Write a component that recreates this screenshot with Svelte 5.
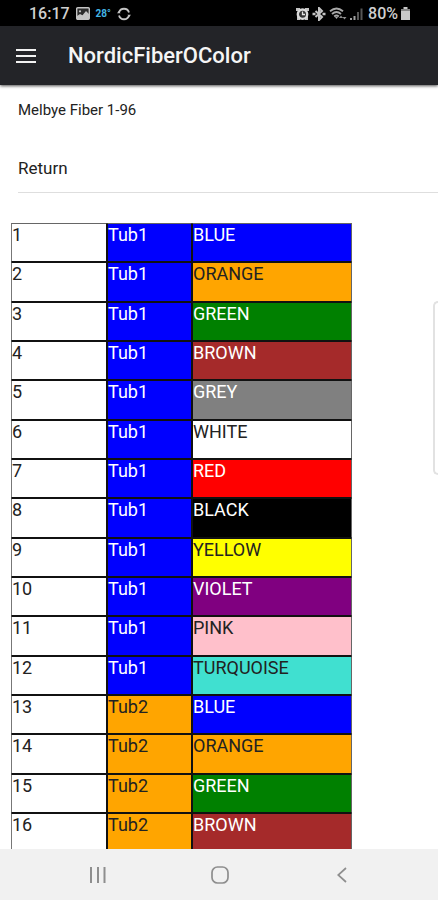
<script>
  const fiberColors = [
    'blue', 'orange', 'green', 'brown', 'grey', 'white',
    'red', 'black', 'yellow', 'violet', 'pink', 'turquoise'
  ];

  const rows = Array.from({ length: 16 }, (_, i) => ({
    number: i + 1,
    tub: Math.floor(i / 12) + 1,
    tubColor: fiberColors[Math.floor(i / 12)],
    color: fiberColors[i % 12]
  }));
</script>

<div class="screen">
  <div class="status">
    <div class="group">
      <span class="clock">16:17</span>
      <svg class="picture" width="14" height="13" viewBox="0 0 14 13" aria-hidden="true">
        <rect x="0.7" y="0.7" width="12.6" height="11.6" rx="1" fill="#2b2b2b" stroke="#c4c4c4" stroke-width="1.4" />
        <circle cx="4" cy="4.3" r="1.1" fill="#c4c4c4" />
        <path d="M1 10.5V9l3-2 2.5 1.2L10 4l3 3v5H1z" fill="#c4c4c4" />
      </svg>
      <span class="temp">28°</span>
      <svg width="14" height="14" viewBox="0 0 14 14" fill="none" stroke="#c4c4c4" stroke-width="1.8" aria-hidden="true">
        <path d="M2 5.5A5.2 5.2 0 0 1 12 5.5M12 8.5A5.2 5.2 0 0 1 2 8.5" />
        <path d="M0 6.2h3.6L1.8 4zM14 7.8h-3.6L12.2 10z" fill="#c4c4c4" stroke="none" />
      </svg>
    </div>
    <div class="group right">
      <svg width="13" height="14" viewBox="0 0 13 14" aria-hidden="true">
        <path d="M0 1h4v3H0zM9 1h4v3H9zM1 10h3v3H1zM9 10h3v3H9z" fill="#c4c4c4" />
        <circle cx="6.5" cy="7.2" r="4.7" fill="#333" stroke="#dadada" stroke-width="2.4" />
        <path d="M6.5 4.5v3h2.5" fill="none" stroke="#e5e5e5" stroke-width="1.3" />
      </svg>
      <svg width="14" height="14" viewBox="0 0 14 14" fill="none" stroke="#c4c4c4" stroke-width="2" aria-hidden="true">
        <path d="M3.5 4l6.5 6-3 3V1l3 3-6.5 6" />
        <path d="M0.5 7h3M10.5 7h3" stroke-width="2.4" />
      </svg>
      <svg class="wifi" width="18" height="14" viewBox="0 0 18 14" fill="none" stroke="#a8a8a8" stroke-width="1.8" aria-hidden="true">
        <path d="M1 4.3Q7.5-1.3 14 4.3M3 7Q7.5 3 12 7M5.2 9.5Q7.5 7.4 9.8 9.5" />
        <path d="M6 10h3l-1.5 2z" fill="#a8a8a8" stroke="none" />
        <path d="M10 11l2-2.5 2 2.5zM13.500 10h4l-2 2.500z" fill="#8c8c8c" stroke="none" />
      </svg>
      <svg width="13" height="14" viewBox="0 0 13 14" aria-hidden="true">
        <path d="M0 11h2v2H0zM3.500 9h2v4h-2z" fill="#a0a0a0" />
        <path d="M7 5h2v8H7zM10.500 1.500h2V13h-2z" fill="#565656" />
      </svg>
      <span class="clock charge">80%</span>
      <svg width="9" height="13" viewBox="0 0 9 13" aria-hidden="true">
        <path d="M2.500 0h4v2H9v11H0V2h2.500z" fill="#c8c8c8" />
        <path d="M0 2h9v2H0z" fill="#858585" />
      </svg>
    </div>
  </div>

  <header>
    <button class="menu" aria-label="Open menu">
      <svg width="20" height="14" viewBox="0 0 20 14" fill="#f2f2f2" aria-hidden="true">
        <path d="M0 0h20v2H0zM0 6h20v2H0zM0 12h20v2H0z" />
      </svg>
    </button>
    <h1>NordicFiberOColor</h1>
  </header>

  <main>
    <p>Melbye Fiber 1-96</p>
    <a class="return" href="#return">Return</a>
    <table aria-label="Fiber colors">
      <colgroup><col class="c1" /><col class="c2" /><col class="c3" /></colgroup>
      <tbody>
        {#each rows as row (row.number)}
          <tr>
            <td>{row.number}</td>
            <td class={row.tubColor}>Tub{row.tub}</td>
            <td class={row.color}>{row.color.toUpperCase()}</td>
          </tr>
        {/each}
      </tbody>
    </table>
  </main>

  <nav aria-label="System">
    <button aria-label="Recent apps">
      <svg width="18" height="16" viewBox="0 0 18 16" fill="#8e8e8e" aria-hidden="true">
        <path d="M1 0h2v16H1zM8 0h2v16H8zM14.500 0h2v16h-2z" />
      </svg>
    </button>
    <button aria-label="Home">
      <svg width="18" height="18" viewBox="0 0 18 18" fill="none" stroke="#8e8e8e" stroke-width="1.700" aria-hidden="true">
        <rect x="1" y="1" width="16" height="16" rx="5.500" />
      </svg>
    </button>
    <button aria-label="Back">
      <svg width="10" height="16" viewBox="0 0 10 16" fill="none" stroke="#8e8e8e" stroke-width="1.700" aria-hidden="true">
        <path d="M9 1L1.200 8 9 15" />
      </svg>
    </button>
  </nav>

  <div class="edge"></div>
</div>

<style>
  .screen {
    position: relative;
    display: flex;
    flex-direction: column;
    height: 100vh;
    overflow: hidden;
    background: #fff;
    color: #222;
    font-family: Roboto, "Liberation Sans", sans-serif;
  }

  .status {
    display: flex;
    justify-content: space-between;
    align-items: center;
    flex: none;
    height: 26px;
    padding: 1px 28px 0 29px;
    box-sizing: border-box;
    background: #000;
    color: #cfcfcf;
  }

  .group {
    display: flex;
    align-items: center;
    gap: 6px;
  }

  .right {
    gap: 3px;
  }

  .clock {
    font-size: 16px;
    line-height: 20px;
    font-weight: 500;
  }

  .temp {
    color: #43b4e4;
    font-size: 10px;
    font-weight: 700;
  }

  .charge {
    margin-left: 2px;
  }

  button {
    display: flex;
    align-items: center;
    justify-content: center;
    margin: 0;
    padding: 0;
    border: 0;
    background: none;
  }

  header {
    position: relative;
    display: flex;
    align-items: center;
    flex: none;
    height: 59px;
    padding-left: 8px;
    background: #232428;
    box-shadow: 0 1px 3px rgba(0, 0, 0, 0.7);
  }

  .menu {
    width: 36px;
    height: 36px;
  }

  h1 {
    margin: 0 0 0 24px;
    color: #f5f5f5;
    font-size: 22px;
    line-height: 28px;
    font-weight: 500;
  }

  main {
    flex: 1;
    min-height: 0;
    overflow: hidden;
  }

  p {
    margin: 15px 18px 0;
    font-size: 15px;
    line-height: 20px;
  }

  .return {
    display: block;
    margin: 24px 0 30px 18px;
    padding: 12px 0;
    border-bottom: 1px solid #dedede;
    color: #222;
    font-size: 17px;
    line-height: 24px;
    text-decoration: none;
  }

  table {
    width: 341px;
    margin-left: 11px;
    border-spacing: 0;
    table-layout: fixed;
    font-size: 18px;
    line-height: 20px;
  }

  .c1 { width: 96px; }
  .c2 { width: 85px; }
  .c3 { width: 160px; }

  tr { height: 39px; }
  tr:nth-child(3n + 2) { height: 40px; }

  td {
    box-sizing: border-box;
    padding: 1px 0 0;
    border: 1px solid #111;
    vertical-align: top;
  }

  td:first-child { border-left-color: #777; }
  td:last-child { border-right-color: #666; }
  tr:first-child td { border-top-color: #666; }

  .blue { background: #00f; color: #fff; }
  .orange { background: #ffa500; }
  .green { background: #008000; color: #fff; }
  .brown { background: #a52a2a; color: #fff; }
  .grey { background: #808080; color: #fff; }
  .white { background: #fff; }
  .red { background: #f00; color: #fff; }
  .black { background: #000; color: #fff; }
  .yellow { background: #ff0; }
  .violet { background: #800080; color: #fff; }
  .pink { background: #ffc0cb; }
  .turquoise { background: #40e0d0; }

  nav {
    display: flex;
    justify-content: center;
    flex: none;
    height: 51px;
    padding-left: 2px;
    background: #f1f1f1;
  }

  nav button {
    width: 122px;
  }

  .edge {
    position: absolute;
    top: 301px;
    right: 0;
    width: 5px;
    height: 174px;
    box-sizing: border-box;
    border: 2px solid #e2e2e2;
    border-right: 0;
    border-radius: 5px 0 0 5px;
  }
</style>
